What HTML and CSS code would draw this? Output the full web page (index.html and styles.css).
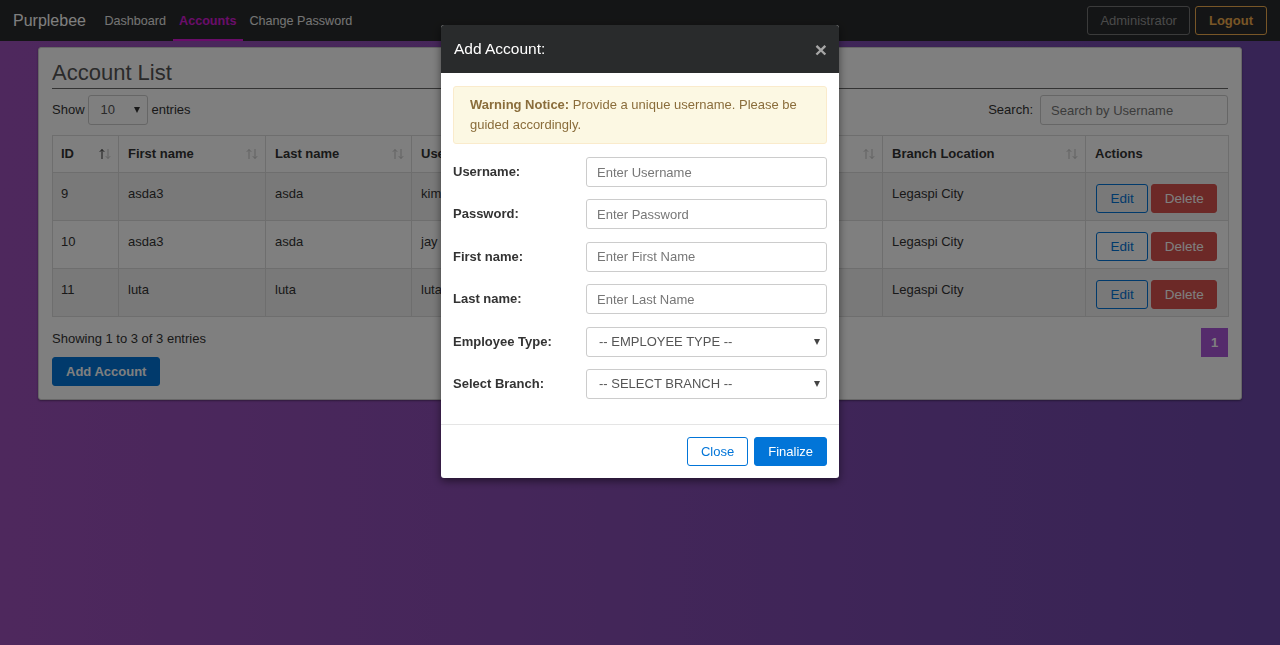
FILE: index.html
```html
<!DOCTYPE html>
<html lang="en">
<head>
<meta charset="utf-8">
<title>Purplebee - Accounts</title>
<link rel="stylesheet" href="styles.css">
</head>
<body>
<nav class="navbar">
  <a class="brand">Purplebee</a>
  <ul class="nav-links">
    <li><a>Dashboard</a></li>
    <li class="active"><a>Accounts</a></li>
    <li><a>Change Password</a></li>
  </ul>
  <div class="nav-right">
    <button class="btn btn-outline-secondary">Administrator</button>
    <button class="btn btn-outline-warning btn-bold">Logout</button>
  </div>
</nav>

<main class="page">
  <section class="panel">
    <h2 class="panel-title">Account List</h2>
    <div class="controls">
      <div class="length">
        <span>Show</span>
        <div class="fake-select length-select"><span class="fs-text">10</span><i class="caret"></i></div>
        <span>entries</span>
      </div>
      <div class="search">
        <span>Search:</span>
        <input class="input search-input" type="text" placeholder="Search by Username">
      </div>
    </div>

    <table class="table">
      <colgroup>
        <col class="c-id"><col class="c-first"><col class="c-last"><col class="c-user"><col class="c-type"><col class="c-branch"><col class="c-actions">
      </colgroup>
      <thead>
        <tr>
          <th class="col-id"><div class="th-inner"><span>ID</span><span class="sort active-asc"><svg class="arr up" viewBox="0 0 6 12" width="6" height="12"><path d="M3 1.5V11M0.8 3.8L3 1.5L5.2 3.8"/></svg><svg class="arr down" viewBox="0 0 6 12" width="6" height="12"><path d="M3 1V10.5M0.8 8.2L3 10.5L5.2 8.2"/></svg></span></div></th>
          <th><div class="th-inner"><span>First name</span><span class="sort"><svg class="arr up" viewBox="0 0 6 12" width="6" height="12"><path d="M3 1.5V11M0.8 3.8L3 1.5L5.2 3.8"/></svg><svg class="arr down" viewBox="0 0 6 12" width="6" height="12"><path d="M3 1V10.5M0.8 8.2L3 10.5L5.2 8.2"/></svg></span></div></th>
          <th><div class="th-inner"><span>Last name</span><span class="sort"><svg class="arr up" viewBox="0 0 6 12" width="6" height="12"><path d="M3 1.5V11M0.8 3.8L3 1.5L5.2 3.8"/></svg><svg class="arr down" viewBox="0 0 6 12" width="6" height="12"><path d="M3 1V10.5M0.8 8.2L3 10.5L5.2 8.2"/></svg></span></div></th>
          <th><div class="th-inner"><span>Username</span><span class="sort"><svg class="arr up" viewBox="0 0 6 12" width="6" height="12"><path d="M3 1.5V11M0.8 3.8L3 1.5L5.2 3.8"/></svg><svg class="arr down" viewBox="0 0 6 12" width="6" height="12"><path d="M3 1V10.5M0.8 8.2L3 10.5L5.2 8.2"/></svg></span></div></th>
          <th><div class="th-inner"><span>Employee Type</span><span class="sort"><svg class="arr up" viewBox="0 0 6 12" width="6" height="12"><path d="M3 1.5V11M0.8 3.8L3 1.5L5.2 3.8"/></svg><svg class="arr down" viewBox="0 0 6 12" width="6" height="12"><path d="M3 1V10.5M0.8 8.2L3 10.5L5.2 8.2"/></svg></span></div></th>
          <th><div class="th-inner"><span>Branch Location</span><span class="sort"><svg class="arr up" viewBox="0 0 6 12" width="6" height="12"><path d="M3 1.5V11M0.8 3.8L3 1.5L5.2 3.8"/></svg><svg class="arr down" viewBox="0 0 6 12" width="6" height="12"><path d="M3 1V10.5M0.8 8.2L3 10.5L5.2 8.2"/></svg></span></div></th>
          <th><div class="th-inner"><span>Actions</span></div></th>
        </tr>
      </thead>
      <tbody>
        <tr>
          <td class="col-id">9</td><td>asda3</td><td>asda</td><td>kim</td><td>Cashier</td><td>Legaspi City</td>
          <td class="actions"><button class="btn btn-outline-primary">Edit</button><button class="btn btn-danger">Delete</button></td>
        </tr>
        <tr>
          <td class="col-id">10</td><td>asda3</td><td>asda</td><td>jay</td><td>Cashier</td><td>Legaspi City</td>
          <td class="actions"><button class="btn btn-outline-primary">Edit</button><button class="btn btn-danger">Delete</button></td>
        </tr>
        <tr>
          <td class="col-id">11</td><td>luta</td><td>luta</td><td>luta</td><td>Cashier</td><td>Legaspi City</td>
          <td class="actions"><button class="btn btn-outline-primary">Edit</button><button class="btn btn-danger">Delete</button></td>
        </tr>
      </tbody>
    </table>

    <div class="table-footer">
      <div class="footer-left">
        <div class="info">Showing 1 to 3 of 3 entries</div>
        <button class="btn btn-primary btn-bold">Add Account</button>
      </div>
      <ul class="pagination">
        <li class="page-item active">1</li>
      </ul>
    </div>
  </section>
</main>

<div class="backdrop"></div>

<div class="modal-wrap">
  <div class="modal">
    <div class="modal-header">
      <h4 class="modal-title">Add Account:</h4>
      <span class="close">×</span>
    </div>
    <div class="modal-body">
      <div class="alert"><strong>Warning Notice:</strong> Provide a unique username. Please be guided accordingly.</div>
      <div class="form">
        <div class="form-row">
          <label>Username:</label>
          <input class="input" type="text" placeholder="Enter Username">
        </div>
        <div class="form-row">
          <label>Password:</label>
          <input class="input" type="password" placeholder="Enter Password">
        </div>
        <div class="form-row">
          <label>First name:</label>
          <input class="input" type="text" placeholder="Enter First Name">
        </div>
        <div class="form-row">
          <label>Last name:</label>
          <input class="input" type="text" placeholder="Enter Last Name">
        </div>
        <div class="form-row">
          <label>Employee Type:</label>
          <div class="fake-select modal-select"><span class="fs-text">-- EMPLOYEE TYPE --</span><i class="caret"></i></div>
        </div>
        <div class="form-row">
          <label>Select Branch:</label>
          <div class="fake-select modal-select"><span class="fs-text">-- SELECT BRANCH --</span><i class="caret"></i></div>
        </div>
      </div>
    </div>
    <div class="modal-footer">
      <button class="btn btn-outline-primary">Close</button>
      <button class="btn btn-primary">Finalize</button>
    </div>
  </div>
</div>
</body>
</html>
```

FILE: styles.css
```css
* { box-sizing: border-box; }

html, body { margin: 0; height: 100%; }

body {
  font-family: "Liberation Sans", Arial, sans-serif;
  font-size: 13px;
  line-height: 20px;
  color: #333;
  background: linear-gradient(to right, #9d50bb, #6e48aa);
  min-height: 100vh;
}

/* ---------- navbar ---------- */
.navbar {
  display: flex;
  align-items: center;
  height: 41px;
  padding: 0 13px;
  background: #292b2c;
}
.brand {
  font-size: 16px;
  color: #fff;
  margin-right: 12px;
}
.nav-links {
  display: flex;
  align-self: stretch;
  list-style: none;
  margin: 0;
  padding: 0;
}
.nav-links li { display: flex; }
.nav-links a {
  display: flex;
  align-items: center;
  padding: 0 6.5px;
  font-size: 12.6px;
  color: #e8e8e8;
}
.nav-links .active a {
  color: #d41bd4;
  font-weight: bold;
  box-shadow: inset 0 -2px 0 #d41bd4;
}
.nav-right {
  margin-left: auto;
  display: flex;
  gap: 5px;
}

/* ---------- buttons ---------- */
.btn {
  display: inline-flex;
  align-items: center;
  justify-content: center;
  height: 29px;
  padding: 0 13px;
  border: 1px solid transparent;
  border-radius: 3px;
  background: transparent;
  font-family: inherit;
  font-size: 13px;
  line-height: 1;
  cursor: pointer;
}
.btn-bold { font-weight: bold; }
.btn-outline-secondary { border-color: #777; color: #959595; padding: 0 12px; }
.btn-outline-warning { border-color: #f0ad4e; color: #f0ad4e; }
.btn-outline-primary { border-color: #0275d8; color: #0275d8; background: #fff; }
.btn-primary { background: #0275d8; border-color: #0275d8; color: #fff; }
.btn-danger { background: #d9534f; border-color: #d9534f; color: #fff; }

/* ---------- panel ---------- */
.page { padding: 6px 38px 0; }
.panel {
  background: #fff;
  border: 1px solid #cfcfcf;
  border-radius: 3px;
  box-shadow: 0 1px 2px rgba(0, 0, 0, 0.35);
  padding: 10px 13px 13px;
}
.panel-title {
  margin: 0 0 6px;
  font-size: 22px;
  font-weight: normal;
  line-height: 30px;
  color: #555;
  border-bottom: 1px solid #666;
}
.controls {
  display: flex;
  justify-content: space-between;
  align-items: center;
  height: 30px;
  margin-bottom: 10px;
}
.length, .search {
  display: flex;
  align-items: center;
}
.length-select { width: 60px; height: 30px; margin: 0 4px 0 3px; padding: 0 7px 0 12px; }
.search { gap: 7px; }

.input {
  height: 30px;
  border: 1px solid #ccc;
  border-radius: 3px;
  padding: 0 10px;
  font-family: inherit;
  font-size: 13px;
  color: #555;
  background: #fff;
  outline: none;
}
.input::placeholder { color: #777; }
.search-input { width: 188px; }

.fake-select {
  display: flex;
  align-items: center;
  border: 1px solid #ccc;
  border-radius: 3px;
  background: #fff;
  color: #555;
}
.fs-text { flex: 1; }
.caret {
  width: 0;
  height: 0;
  border-left: 3.5px solid transparent;
  border-right: 3.5px solid transparent;
  border-top: 6px solid #333;
}

/* ---------- table ---------- */
.table {
  width: 100%;
  border-collapse: collapse;
  table-layout: fixed;
}
.c-id { width: 66px; }
.c-first { width: 147px; }
.c-last { width: 146px; }
.c-user { width: 235px; }
.c-type { width: 236px; }
.c-branch { width: 203px; }
.c-actions { width: 143px; }

.table th, .table td {
  border: 1px solid #ddd;
  text-align: left;
  white-space: nowrap;
  overflow: hidden;
  color: #333;
}
.table th {
  height: 37px;
  padding: 0 7px 0 9px;
  font-weight: bold;
}
.table .col-id { padding-left: 8px; }
.th-inner {
  display: flex;
  justify-content: space-between;
  align-items: center;
}
.sort { display: flex; gap: 0; }
.arr { display: block; fill: none; stroke: #c2c2c2; stroke-width: 1; }
.active-asc .up { stroke: #333; }
.table td {
  padding: 11px 9px 7px;
  vertical-align: top;
  height: 47px;
}
.table tbody tr:nth-child(odd) td { background: #f2f2f2; }
.table td.actions { padding-left: 10px; }
.actions .btn { margin-right: 3px; font-size: 13.5px; }
.actions .btn-outline-primary { background: transparent; padding: 0 13.5px; }
.actions .btn-danger { padding: 0 12.5px; }

.table-footer {
  display: flex;
  justify-content: space-between;
  align-items: flex-start;
  margin-top: 11px;
}
.footer-left { display: flex; flex-direction: column; align-items: flex-start; gap: 8px; }
.info { line-height: 21px; }
.pagination { list-style: none; margin: 0; padding: 0; display: flex; }
.page-item {
  width: 27px;
  height: 29px;
  display: flex;
  align-items: center;
  justify-content: center;
  background: #aa57d9;
  color: #fff;
  font-weight: bold;
}

/* ---------- modal ---------- */
.backdrop {
  position: fixed;
  inset: 0;
  background: rgba(0, 0, 0, 0.5);
}
.modal-wrap {
  position: fixed;
  inset: 0;
}
.modal {
  width: 398px;
  margin: 25px auto 0;
  background: #fff;
  border-radius: 3px;
  box-shadow: 0 3px 9px rgba(0, 0, 0, 0.5);
  overflow: hidden;
}
.modal-header {
  display: flex;
  align-items: center;
  justify-content: space-between;
  height: 48px;
  padding: 0 12px 0 13px;
  background: #292b2c;
  color: #fff;
}
.modal-title {
  margin: 0;
  font-size: 15.5px;
  font-weight: normal;
}
.close {
  color: #a6a6a6;
  font-size: 21px;
  font-weight: bold;
  line-height: 1;
}
.modal-body { padding: 13px 12px 25px; }
.alert {
  background: #fcf8e3;
  border: 1px solid #faebcc;
  border-radius: 3px;
  color: #8a6d3b;
  padding: 8px 16px;
  line-height: 20px;
  margin-bottom: 13px;
}
.form {
  display: flex;
  flex-direction: column;
  gap: 12.4px;
}
.form-row {
  display: grid;
  grid-template-columns: 133px 1fr;
  align-items: center;
  height: 30px;
}
.form-row label { font-weight: bold; color: #333; }
.form-row .input { width: 100%; }
.modal-select { height: 30px; padding: 0 6px 0 12px; }
.modal-select .caret { border-top-color: #444; }

.modal-footer {
  display: flex;
  justify-content: flex-end;
  gap: 6px;
  padding: 12px;
  border-top: 1px solid #e5e5e5;
}
.modal-footer .btn { padding: 0 13px; }
```
